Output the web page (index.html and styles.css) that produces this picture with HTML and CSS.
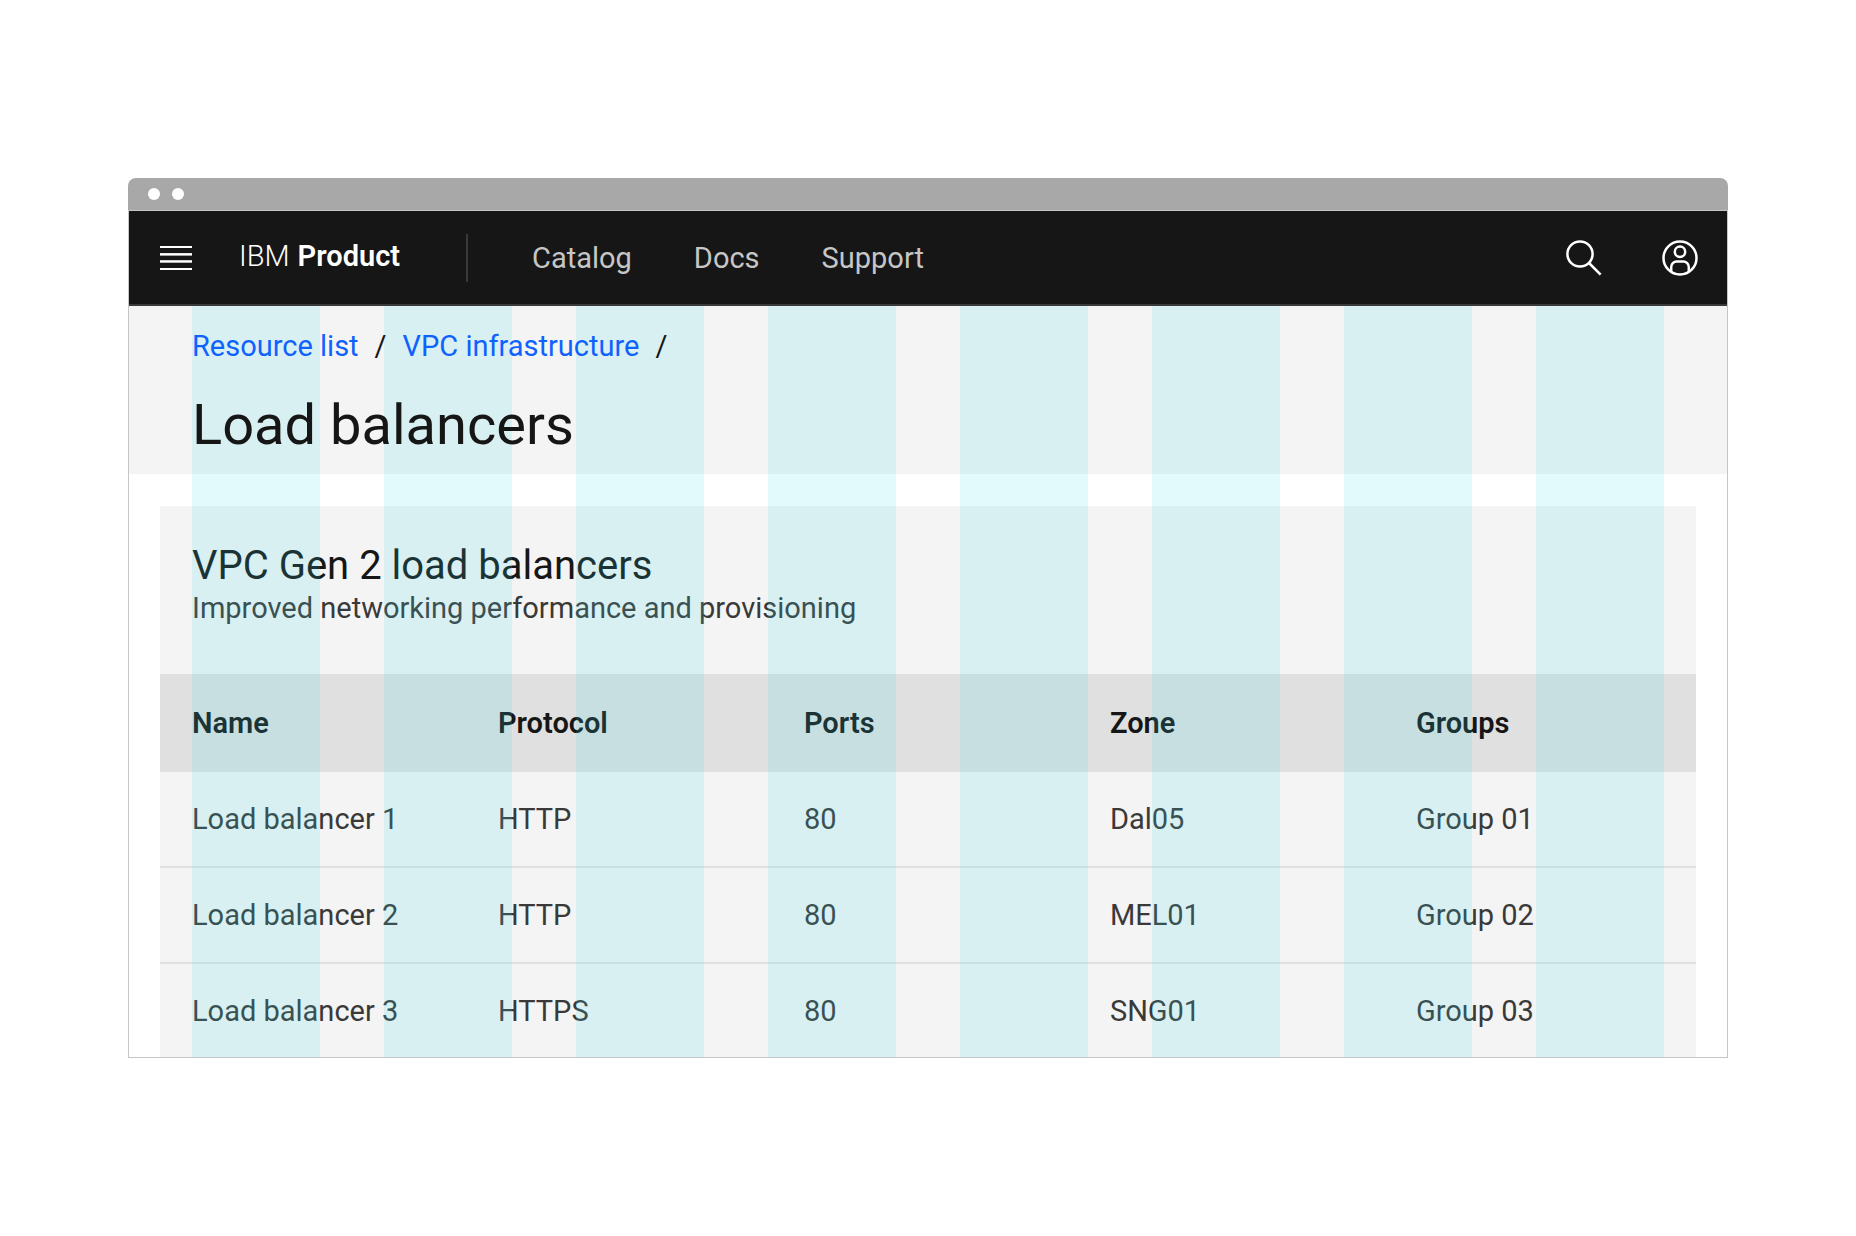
FILE: index.html
```html
<!DOCTYPE html>
<html lang="en">
<head>
<meta charset="utf-8">
<meta name="viewport" content="width=device-width, initial-scale=1">
<title>Load balancers</title>
<link rel="stylesheet" href="styles.css">
</head>
<body>
<div class="window">
  <div class="titlebar"><span class="dot"></span><span class="dot"></span></div>
  <div class="viewport">
    <header class="header">
      <button class="header-btn menu-btn" type="button" aria-label="Open menu">
        <svg class="menu-icon" viewBox="0 0 32 24" fill="currentColor" aria-hidden="true"><rect width="32" height="2"/><rect y="7.1" width="32" height="2.5"/><rect y="14.2" width="32" height="2.5"/><rect y="22" width="32" height="2"/></svg>
      </button>
      <a class="brand" href="#"><span>IBM</span><strong>Product</strong></a>
      <span class="divider"></span>
      <nav class="nav" aria-label="Main">
        <a href="#">Catalog</a>
        <a href="#">Docs</a>
        <a href="#">Support</a>
      </nav>
      <div class="actions">
        <button class="header-btn" type="button" aria-label="Search">
          <svg class="icon" viewBox="-1 0 40 40" fill="none" stroke="currentColor" stroke-width="2.5" aria-hidden="true"><circle cx="16" cy="16" r="12.6"/><path d="M25 25 36.6 36.6"/></svg>
        </button>
        <button class="header-btn" type="button" aria-label="Account">
          <svg class="icon" viewBox="-1 0 40 40" fill="none" stroke="currentColor" stroke-width="2.5" aria-hidden="true"><circle cx="20" cy="20" r="16.5"/><circle cx="20" cy="13.8" r="5.2"/><path d="M11.2 34V29a5.5 5.5 0 0 1 5.5-5.5h6.6a5.5 5.5 0 0 1 5.5 5.5v5"/></svg>
        </button>
      </div>
    </header>
    <main class="page">
      <div class="page-header">
        <nav class="breadcrumb" aria-label="Breadcrumb">
          <a href="#">Resource list</a><span>/</span><a href="#">VPC infrastructure</a><span>/</span>
        </nav>
        <h1 class="page-title">Load balancers</h1>
      </div>
      <section class="card">
        <div class="card-header">
          <h2 class="card-title">VPC Gen 2 load balancers</h2>
          <p class="card-text">Improved networking performance and provisioning</p>
        </div>
        <table class="table">
          <thead>
            <tr><th scope="col">Name</th><th scope="col">Protocol</th><th scope="col">Ports</th><th scope="col">Zone</th><th scope="col">Groups</th></tr>
          </thead>
          <tbody>
            <tr><td>Load balancer 1</td><td>HTTP</td><td>80</td><td>Dal05</td><td>Group 01</td></tr>
            <tr><td>Load balancer 2</td><td>HTTP</td><td>80</td><td>MEL01</td><td>Group 02</td></tr>
            <tr><td>Load balancer 3</td><td>HTTPS</td><td>80</td><td>SNG01</td><td>Group 03</td></tr>
          </tbody>
        </table>
      </section>
      <div class="grid-overlay" aria-hidden="true"><i></i><i></i><i></i><i></i><i></i><i></i><i></i><i></i></div>
    </main>
  </div>
</div>
</body>
</html>
```
FILE: styles.css
```css
*, *::before, *::after { box-sizing: border-box; }

body {
  margin: 0;
  padding: 178px 128px;
  background: #fff;
  color: #161616;
  font-family: Roboto, "Liberation Sans", sans-serif;
  font-size: 29px;
  line-height: 36px;
}

h1, h2, p { margin: 0; font-weight: 400; }
a { text-decoration: none; }

/* Browser frame */
.titlebar {
  display: flex;
  align-items: center;
  gap: 12px;
  height: 32px;
  padding: 0 20px;
  border-radius: 8px 8px 0 0;
  background: #a8a8a8;
}
.dot { width: 12px; height: 12px; border-radius: 50%; background: #fff; }
.viewport { border: 1px solid #c6c6c6; }

/* Product header */
.header {
  display: flex;
  align-items: center;
  height: 95px;
  border-bottom: 2px solid #393939;
  background: #161616;
  color: #fff;
}
.header-btn {
  display: flex;
  align-items: center;
  justify-content: center;
  width: 96px;
  height: 93px;
  padding: 0;
  border: 0;
  background: none;
  color: inherit;
}
.menu-btn { width: 94px; }
.menu-icon { width: 32px; height: 24px; }
.icon { width: 40px; height: 40px; }
.brand { display: flex; gap: 8px; margin-left: 16px; padding-bottom: 4px; color: #fff; }
.brand span { font-weight: 300; }
.brand strong { font-weight: 600; }
.divider { width: 2px; height: 48px; margin: 0 64px 0 66px; background: #393939; }
.nav { display: flex; gap: 62px; }
.nav a { color: #c6c6c6; }
.actions { display: flex; margin-left: auto; }

/* Page */
.page { position: relative; }
.page-header { padding: 22px 63px 16px; background: #f4f4f4; }
.breadcrumb, .page-title { position: relative; z-index: 2; }
.breadcrumb { display: flex; gap: 16px; margin-bottom: 28px; }
.breadcrumb a { color: #0f62fe; }
.page-title { font-size: 56px; line-height: 66px; }

.card { margin: 32px 31px 0; background: #f4f4f4; }
.card-header { padding: 36px 32px 48px; }
.card-title { font-size: 40px; line-height: 48px; }
.card-text { color: #393939; }

.table { width: 100%; border-collapse: separate; border-spacing: 0; table-layout: fixed; }
.table th, .table td { padding: 0 0 0 32px; text-align: left; }
.table th { height: 98px; background: #e0e0e0; font-weight: 600; }
.table th:not(:last-child) { width: 19.92%; }
.table td { height: 96px; border-bottom: 2px solid #e0e0e0; color: #393939; }
.table tr:last-child td { height: 93px; border-bottom: 0; }

/* Column guides laid over the page */
.grid-overlay {
  position: absolute;
  inset: 0 63px;
  z-index: 1;
  display: grid;
  grid-template-columns: repeat(8, 1fr);
  gap: 64px;
  pointer-events: none;
}
.grid-overlay i { background: rgba(64, 224, 232, 0.15); }
```
